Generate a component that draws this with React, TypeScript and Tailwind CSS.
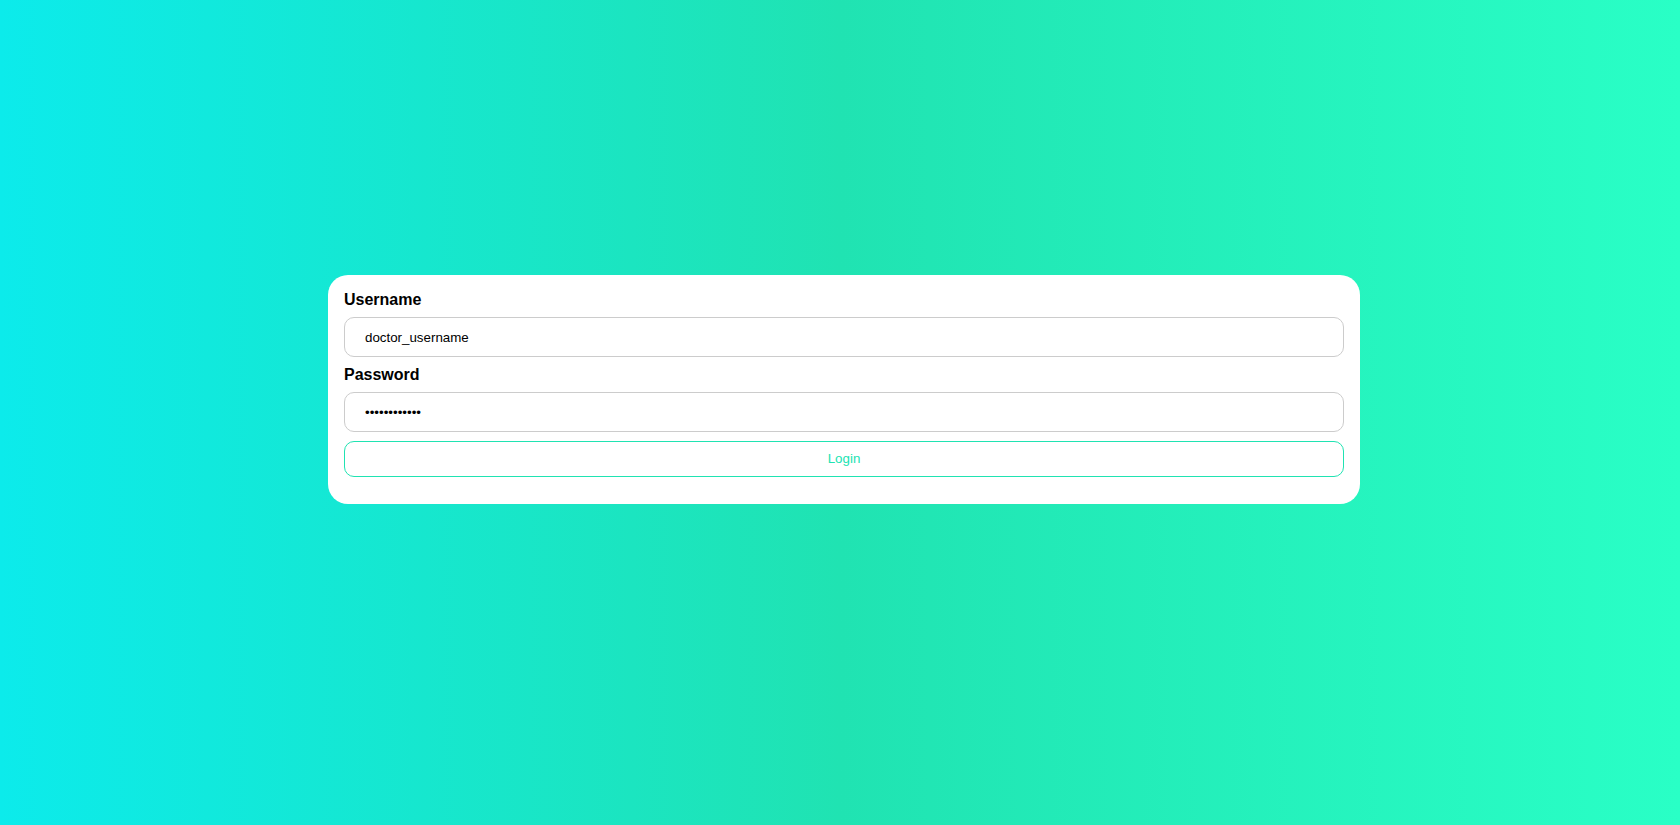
export default function App() {
  return (
    <div
      className="flex min-h-[825px] w-full justify-center bg-[linear-gradient(to_right,#0cebeb,#20e3b2,#29ffc6)] pt-[275px] pl-[8px]"
      style={{ fontFamily: '"Liberation Sans", Arial, sans-serif' }}
    >
      <form
        className="flex h-[229px] w-[1032px] flex-col rounded-[20px] bg-white px-4 pt-4"
        onSubmit={(e) => e.preventDefault()}
      >
        <label className="text-[16px] leading-[18px] font-bold text-black">Username</label>
        <input
          type="text"
          defaultValue="doctor_username"
          className="mt-2 h-[40px] w-full rounded-[10px] border border-[#cccccc] px-5 text-[13.33px] text-black outline-none"
        />
        <label className="mt-[9px] text-[16px] leading-[18px] font-bold text-black">Password</label>
        <input
          type="password"
          defaultValue="doctorpasswd"
          className="mt-2 h-[40px] w-full rounded-[10px] border border-[#cccccc] px-5 text-[13.33px] text-black outline-none"
        />
        <button
          type="submit"
          className="mt-[9px] h-[36px] w-full rounded-[10px] border border-[#20e3b2] bg-white text-[13.33px] text-[#20e3b2]"
        >
          Login
        </button>
      </form>
    </div>
  )
}
